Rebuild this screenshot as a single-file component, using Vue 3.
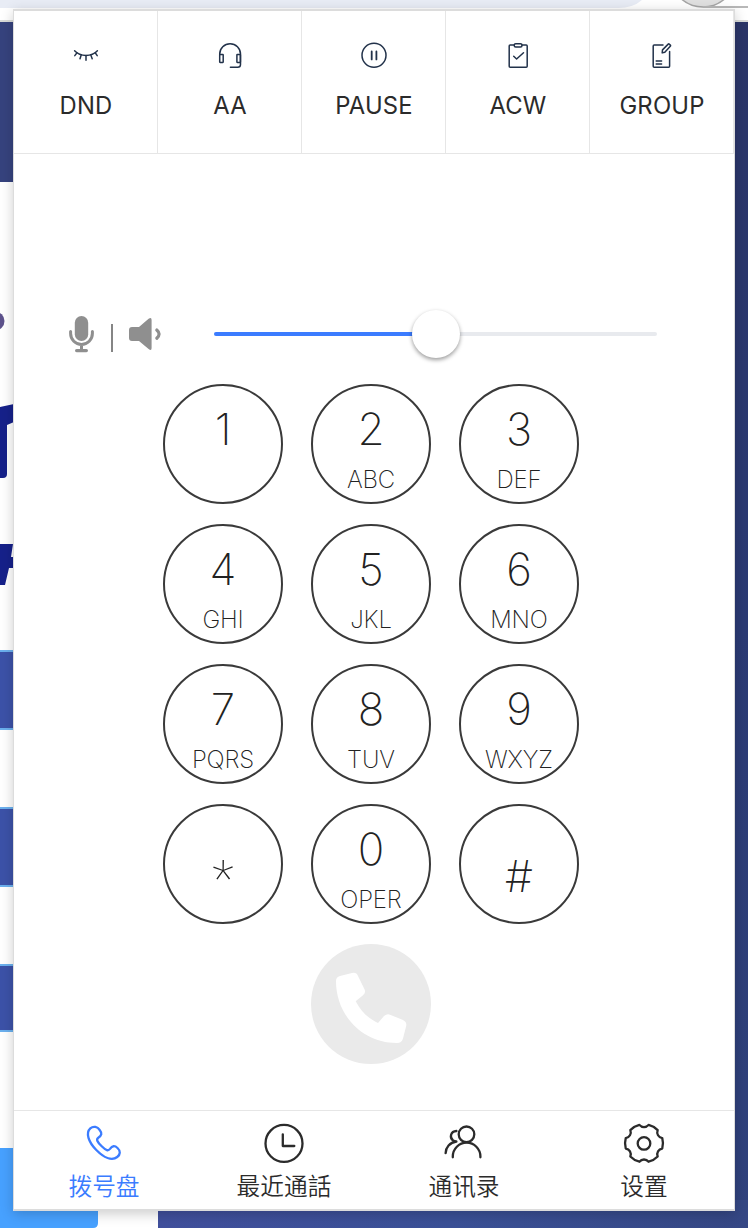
<script setup>
const actions = [
  { name: 'DND', icon: 'dnd' },
  { name: 'AA', icon: 'headset' },
  { name: 'PAUSE', icon: 'pause' },
  { name: 'ACW', icon: 'clipboard' },
  { name: 'GROUP', icon: 'edit' },
]

const keys = [
  { main: '1', sub: '' },
  { main: '2', sub: 'ABC' },
  { main: '3', sub: 'DEF' },
  { main: '4', sub: 'GHI' },
  { main: '5', sub: 'JKL' },
  { main: '6', sub: 'MNO' },
  { main: '7', sub: 'PQRS' },
  { main: '8', sub: 'TUV' },
  { main: '9', sub: 'WXYZ' },
  { main: '*', sub: '', kind: 'star' },
  { main: '0', sub: 'OPER' },
  { main: '#', sub: '', kind: 'hash' },
]

const tabs = [
  { name: '拨号盘', icon: 'phone', active: true },
  { name: '最近通話', icon: 'clock' },
  { name: '通讯录', icon: 'users' },
  { name: '设置', icon: 'gear' },
]

const volume = 50

// Six-lobed gear outline: lobes are arcs, joined by shallow notches.
function gearPath(cx, cy, r) {
  const at = (deg, radius) => {
    const a = (deg * Math.PI) / 180
    return `${(cx + radius * Math.sin(a)).toFixed(2)} ${(cy - radius * Math.cos(a)).toFixed(2)}`
  }
  let d = `M${at(-14, r)}`
  for (let i = 0; i < 6; i++) {
    const n = i * 60
    d += `C${at(n - 8, r - 3.4)} ${at(n + 8, r - 3.4)} ${at(n + 14, r)}`
    d += `A${r} ${r} 0 0 1 ${at(n + 46, r)}`
  }
  return d + 'Z'
}
const gear = gearPath(24, 24.3, 19)
</script>

<template>
  <div class="page">
    <svg class="backdrop" width="748" height="1228" viewBox="0 0 748 1228" aria-hidden="true">
      <defs>
        <linearGradient id="sky" x1="0" y1="0" x2="0" y2="1">
          <stop offset="0" stop-color="#2b3568" />
          <stop offset="0.5" stop-color="#2b3a74" />
          <stop offset="1" stop-color="#30427d" />
        </linearGradient>
        <linearGradient id="strip" x1="0" y1="0" x2="1" y2="0">
          <stop offset="0" stop-color="#404f9c" />
          <stop offset="0.5" stop-color="#3a5096" />
          <stop offset="1" stop-color="#354784" />
        </linearGradient>
      </defs>
      <rect width="748" height="1228" fill="#fff" />
      <path d="M0 0H642Q633 8 618 8H0Z" fill="#e8ecf5" />
      <circle cx="703" cy="-26" r="33" fill="#e0e0e0" stroke="#a5a5a5" stroke-width="1.5" />
      <rect x="703" y="6" width="45" height="2" fill="#b8b8b8" />
      <rect y="20" width="748" height="2" fill="#d9dbd9" />
      <rect y="22" width="14" height="160" fill="#36437e" />
      <rect x="734" y="22" width="14" height="1206" fill="url(#sky)" />
      <circle cx="-5" cy="321" r="9.5" fill="#5d528c" />
      <path d="M0 407L14 404V422L7 425V474Q7 478 3 478H0Z" fill="#16218a" />
      <path d="M0 544H13L11 557H14V568H9L5 585H0Z" fill="#16218a" />
      <g fill="#3c52a8">
        <rect y="650" width="14" height="80" />
        <rect y="807" width="14" height="80" />
        <rect y="964" width="14" height="68" />
      </g>
      <g fill="#6bb0ee">
        <rect y="650" width="14" height="2" />
        <rect y="728" width="14" height="2" />
        <rect y="807" width="14" height="2" />
        <rect y="885" width="14" height="2" />
        <rect y="964" width="14" height="2" />
        <rect y="1030" width="14" height="2" />
      </g>
      <path d="M0 1148H98V1223Q98 1228 93 1228H0Z" fill="#47a1ff" />
      <rect x="158" y="1200" width="590" height="28" fill="url(#strip)" />
    </svg>

    <main class="panel">
      <nav class="actions">
        <button v-for="a in actions" :key="a.name" class="action">
          <svg class="action-icon" viewBox="0 0 28 28">
            <g v-if="a.icon === 'dnd'">
              <path d="M2.6 8.8C8.5 15 19.5 15 25.4 8.8" />
              <path d="M5 10.8L2.8 13.6M9.2 13L8 16.8M14 13.6V18.2M18.8 13L20.2 16.8M23.2 10.8L25.2 13.6" />
            </g>
            <g v-else-if="a.icon === 'headset'">
              <path d="M3.7 12.6V12.1A10.4 10.4 0 0 1 24.5 12.1V22.5A2.8 2.8 0 0 1 21.7 25.3H14.4" />
              <rect x="3.7" y="12.6" width="3.5" height="7.8" rx=".4" />
              <rect x="20.9" y="12.6" width="3.5" height="7.8" rx=".4" />
            </g>
            <g v-else-if="a.icon === 'pause'">
              <circle cx="14" cy="13.3" r="12" />
              <path d="M11.7 9.4V17.4M16.4 9.4V17.4" stroke-width="1.8" />
            </g>
            <g v-else-if="a.icon === 'clipboard'">
              <path d="M10 3.1H6.2Q5.2 3.1 5.2 4.1V24.3Q5.2 25.3 6.2 25.3H22.2Q23.2 25.3 23.2 24.3V4.1Q23.2 3.1 22.2 3.1H18" />
              <rect x="10.2" y="1.7" width="7.8" height="3.4" rx="1.5" />
              <path d="M9.7 14.3L12.6 17L19.5 10.8" />
            </g>
            <g v-else>
              <path d="M15 3.1H6.2Q5.2 3.1 5.2 4.1V24.3Q5.2 25.3 6.2 25.3H20.6Q21.6 25.3 21.6 24.3V9.4" />
              <path d="M14.2 10.9L14.5 7.9L20.2 2.1Q20.8 1.6 21.4 2.2L22.3 3.1Q22.9 3.7 22.3 4.3L16.8 10.2Z" />
              <path d="M8.2 19H13.6M8.2 22H13.6" />
            </g>
          </svg>
          <span class="action-label">{{ a.name }}</span>
        </button>
      </nav>

      <section class="audio">
        <svg class="mic" viewBox="0 0 32 40">
          <rect x="8.8" y="2" width="13.4" height="25" rx="6.7" fill="#8f8f8f" />
          <path d="M4.6 17.6V19.6A10.9 10.9 0 0 0 26.4 19.6V17.6M15.5 31V36" fill="none" stroke="#8f8f8f" stroke-width="3" stroke-linecap="round" />
          <rect x="9" y="35" width="13" height="3.2" rx="1.6" fill="#8f8f8f" />
        </svg>
        <span class="divider"></span>
        <svg class="speaker" viewBox="0 0 36 40">
          <path d="M4 13H11L20.6 4.8Q23.6 2.8 23.6 6V34Q23.6 37.2 20.6 35L11 27H4Q1 27 1 24V16Q1 13 4 13Z" fill="#8f8f8f" />
          <path d="M28.8 16Q33.4 20 28.8 24.2" fill="none" stroke="#8f8f8f" stroke-width="3.2" stroke-linecap="round" />
        </svg>
        <div class="slider">
          <div class="slider-fill" :style="{ width: volume + '%' }"></div>
          <div class="slider-thumb" :style="{ left: volume + '%' }"></div>
        </div>
      </section>

      <section class="keypad">
        <button v-for="k in keys" :key="k.main" class="key" :class="k.kind">
          <span class="key-main">{{ k.main }}</span>
          <span v-if="k.sub" class="key-sub">{{ k.sub }}</span>
        </button>
        <button class="call">
          <svg viewBox="0 0 120 120">
            <path d="M25 37Q25 33 29 32L41 29Q45.500 28 47 32L53.600 45.500Q55 49 52 51.200L44.700 57.200C50 67.500 57 74 67 79L73 72Q76 69.500 79 70.700L92 76Q96 78 95.200 82L92 94.500Q90.700 99 86 99C51 99 25 71 25 37Z" fill="#fff" />
          </svg>
        </button>
      </section>

      <nav class="tabs">
        <button v-for="t in tabs" :key="t.name" class="tab" :class="{ active: t.active }">
          <svg class="tab-icon" viewBox="0 0 48 48">
            <path v-if="t.icon === 'phone'" d="M10.300 9.400C13.500 6.700 17.500 7.800 19.700 11C22.400 14.500 21.700 16.400 18.300 18.700C15.900 20.400 17.200 22.800 21.700 27.300C26.300 31.800 28.200 32.200 30 29.900C32.300 26.600 34.700 26.400 37.500 29C40.600 31.900 40.600 35.400 37.200 38C32 42.200 24 38.800 16.300 31C8.300 22.800 5.500 14 10.300 9.400Z" />
            <g v-else-if="t.icon === 'clock'">
              <circle cx="24" cy="24.400" r="18.500" />
              <path d="M22.800 15.300V27H34.300" />
            </g>
            <g v-else-if="t.icon === 'users'">
              <circle cx="26.500" cy="15.300" r="7.800" />
              <path d="M12.800 38.300V37.500A13.800 13.800 0 0 1 40.400 37.500V38.300" />
              <path d="M16.400 12C10.500 12.300 9.300 18.500 13 21.300Q14.200 22.200 16.400 22.500C9.800 23.500 5.700 28.500 5.600 34.200" />
            </g>
            <g v-else>
              <path :d="gear" />
              <circle cx="24" cy="24.400" r="6.300" />
            </g>
          </svg>
          <span class="tab-label">{{ t.name }}</span>
        </button>
      </nav>
    </main>
  </div>
</template>

<style>
body {
  margin: 0;
  overflow: hidden;
}
</style>

<style scoped>
* {
  box-sizing: border-box;
}
button {
  margin: 0;
  padding: 0;
  border: 0;
  background: none;
  color: inherit;
  font: inherit;
}
.page {
  position: relative;
  width: 748px;
  height: 1228px;
  padding: 9px 13px 17px;
  overflow: hidden;
  font-family: Inter, 'Noto Sans CJK SC', sans-serif;
  color: #2b2b2b;
}
.backdrop {
  position: absolute;
  inset: 0;
}
.panel {
  position: relative;
  display: flex;
  flex-direction: column;
  width: 722px;
  height: 1202px;
  border: 1px solid #dcdcdc;
  border-width: 2px 1px;
  background: #fff;
  box-shadow: 0 3px 12px rgba(0, 0, 0, 0.2);
}
.actions {
  display: grid;
  grid-template-columns: repeat(5, 144px);
  height: 143px;
}
.action {
  display: flex;
  flex-direction: column;
  align-items: center;
  padding-top: 31px;
  border-right: 1px solid #e6e6e6;
  border-bottom: 1px solid #e6e6e6;
}
.action-icon {
  width: 28px;
  height: 28px;
  margin-left: 1px;
  fill: none;
  stroke: #22324a;
  stroke-width: 1.5;
  stroke-linecap: round;
  stroke-linejoin: round;
}
.action-label {
  margin-top: 20px;
  margin-left: 1px;
  font-size: 23.8px;
  font-weight: 375;
  line-height: 32px;
  letter-spacing: 0.2px;
}
.audio {
  display: flex;
  align-items: center;
  height: 48px;
  margin-top: 156px;
  padding: 0 77px 0 52px;
}
.mic {
  width: 32px;
  height: 40px;
}
.divider {
  width: 2px;
  height: 28px;
  margin: 8px 15px 0 13px;
  background: #858585;
}
.speaker {
  width: 36px;
  height: 40px;
}
.slider {
  position: relative;
  flex: 1;
  height: 4px;
  margin-left: 50px;
  border-radius: 2px;
  background: #e8eaee;
}
.slider-fill {
  height: 4px;
  border-radius: 2px;
  background: #3b7cff;
}
.slider-thumb {
  position: absolute;
  top: -22px;
  width: 48px;
  height: 48px;
  margin-left: -24px;
  border-radius: 50%;
  background: #fff;
  box-shadow: 0 2px 4px rgba(0, 0, 0, 0.4);
}
.keypad {
  display: grid;
  grid-template-columns: repeat(3, 120px);
  grid-auto-rows: 120px;
  gap: 20px 28px;
  margin: 26px 0 0 149px;
}
.key {
  display: flex;
  flex-direction: column;
  align-items: center;
  border: 2px solid #3a3a3a;
  border-radius: 50%;
  color: #222;
}
.key-main {
  height: 50px;
  margin-top: 17px;
  font-size: 44px;
  font-weight: 165;
  line-height: 52px;
}
.key-sub {
  margin-top: 12px;
  font-size: 24px;
  font-weight: 165;
  line-height: 30px;
  letter-spacing: -0.15px;
}
.star .key-main {
  margin-top: 47px;
  font-family: Roboto, sans-serif;
  font-size: 50px;
  font-weight: 100;
}
.hash .key-main {
  margin-top: 44px;
}
.call {
  grid-column: 2;
  border-radius: 50%;
  background: #eaeaea;
}
.call svg {
  display: block;
  width: 120px;
  height: 120px;
}
.tabs {
  display: grid;
  grid-template-columns: repeat(4, 180px);
  height: 99px;
  margin-top: auto;
  border-top: 1px solid #e6e6e6;
}
.tab {
  display: flex;
  flex-direction: column;
  align-items: center;
  padding-top: 8px;
}
.tab-icon {
  width: 48px;
  height: 48px;
  fill: none;
  stroke: currentColor;
  stroke-width: 2.3;
  stroke-linecap: round;
  stroke-linejoin: round;
}
.tab-label {
  font-size: 23.7px;
  font-weight: 350;
  line-height: 36px;
  font-family: 'Noto Sans CJK SC', sans-serif;
  margin-top: 0;
}
.active {
  color: #3b7cff;
}
</style>
